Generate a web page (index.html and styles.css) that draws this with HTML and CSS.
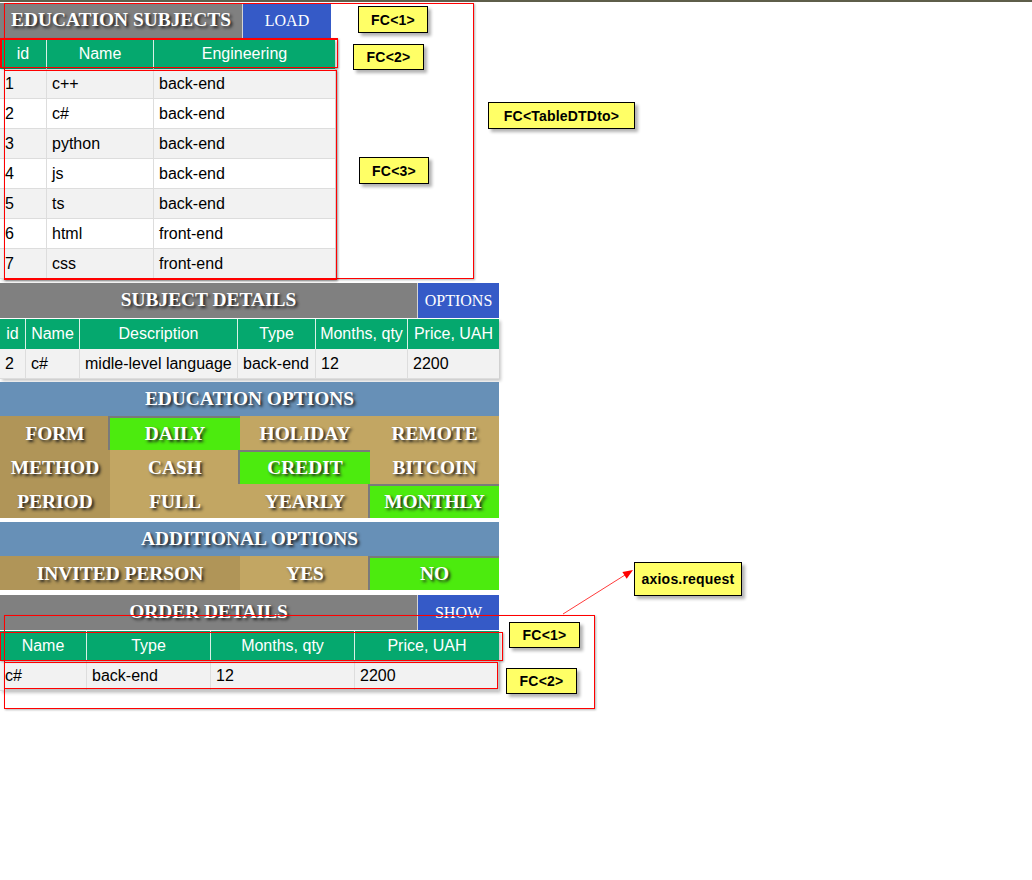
FILE: index.html
```html
<!DOCTYPE html>
<html lang="en">
<head>
<meta charset="utf-8">
<title>Education subjects</title>
<link rel="stylesheet" href="styles.css">
</head>
<body>
<div class="canvas">
  <div class="topline"></div>
  <main class="page">
    <section class="subjects">
      <div class="panel-head">
        <h2 class="panel-title t-subj">EDUCATION SUBJECTS</h2>
        <button class="btn b-subj">LOAD</button>
      </div>
      <table class="tbl">
        <thead>
          <tr><th class="c-s1">id</th><th class="c-s2">Name</th><th class="c-s3">Engineering</th></tr>
        </thead>
        <tbody>
          <tr><td>1</td><td>c++</td><td>back-end</td></tr>
          <tr><td>2</td><td>c#</td><td>back-end</td></tr>
          <tr><td>3</td><td>python</td><td>back-end</td></tr>
          <tr><td>4</td><td>js</td><td>back-end</td></tr>
          <tr><td>5</td><td>ts</td><td>back-end</td></tr>
          <tr><td>6</td><td>html</td><td>front-end</td></tr>
          <tr><td>7</td><td>css</td><td>front-end</td></tr>
        </tbody>
      </table>
    </section>

    <section class="details">
      <div class="panel-head">
        <h2 class="panel-title t-wide">SUBJECT DETAILS</h2>
        <button class="btn b-wide">OPTIONS</button>
      </div>
      <table class="tbl">
        <thead>
          <tr><th class="c-d1">id</th><th class="c-d2">Name</th><th class="c-d3">Description</th><th class="c-d4">Type</th><th class="c-d5">Months, qty</th><th class="c-d6">Price, UAH</th></tr>
        </thead>
        <tbody>
          <tr><td>2</td><td>c#</td><td>midle-level language</td><td>back-end</td><td>12</td><td>2200</td></tr>
        </tbody>
      </table>
    </section>

    <section class="options">
      <h2 class="bar">EDUCATION OPTIONS</h2>
      <div class="opt-grid">
        <div class="cell label">FORM</div>
        <div class="cell on">DAILY</div>
        <div class="cell">HOLIDAY</div>
        <div class="cell">REMOTE</div>
        <div class="cell label">METHOD</div>
        <div class="cell">CASH</div>
        <div class="cell on">CREDIT</div>
        <div class="cell">BITCOIN</div>
        <div class="cell label">PERIOD</div>
        <div class="cell">FULL</div>
        <div class="cell">YEARLY</div>
        <div class="cell on">MONTHLY</div>
      </div>
    </section>

    <section class="additional">
      <h2 class="bar">ADDITIONAL OPTIONS</h2>
      <div class="add-row">
        <div class="cell label">INVITED PERSON</div>
        <div class="cell">YES</div>
        <div class="cell on">NO</div>
      </div>
    </section>

    <section class="order">
      <div class="panel-head">
        <h2 class="panel-title t-wide">ORDER DETAILS</h2>
        <button class="btn b-wide">SHOW</button>
      </div>
      <table class="tbl">
        <thead>
          <tr><th class="c-o1">Name</th><th class="c-o2">Type</th><th class="c-o3">Months, qty</th><th class="c-o4">Price, UAH</th></tr>
        </thead>
        <tbody>
          <tr><td>c#</td><td>back-end</td><td>12</td><td>2200</td></tr>
        </tbody>
      </table>
    </section>
  </main>

  <div class="frame r-subj-outer"></div>
  <div class="frame r-subj-head"></div>
  <div class="frame r-subj-rows"></div>
  <div class="frame r-order-outer"></div>
  <div class="frame r-order-head"></div>
  <div class="frame r-order-rows"></div>

  <div class="note n-s1">FC&lt;1&gt;</div>
  <div class="note n-s2">FC&lt;2&gt;</div>
  <div class="note n-s3">FC&lt;3&gt;</div>
  <div class="note n-dto">FC&lt;TableDTDto&gt;</div>
  <div class="note n-axios">axios.request</div>
  <div class="note n-o1">FC&lt;1&gt;</div>
  <div class="note n-o2">FC&lt;2&gt;</div>

  <svg class="arrow" width="85" height="55" viewBox="0 0 85 55">
    <line x1="8" y1="49" x2="70" y2="10" stroke="#ff3b3b" stroke-width="1"/>
    <polygon points="78,5 71.7,13.7 67.4,6.9" fill="#ff0000"/>
  </svg>
</div>
</body>
</html>
```

FILE: styles.css
```css
* { box-sizing: border-box; }

body {
  margin: 0;
  background: #ffffff;
  font-family: "Liberation Sans", Arial, sans-serif;
}

.canvas {
  position: relative;
  width: 1032px;
  height: 880px;
}

.topline {
  height: 2px;
  background: #5e5e4a;
  margin-bottom: 1px;
}

.page {
  width: 499px;
  display: flex;
  flex-direction: column;
}

/* ---------- panel headers ---------- */
.panel-head {
  display: flex;
  height: 35px;
  margin-bottom: 1px;
}

.panel-title {
  margin: 0;
  flex: none;
  background: #808080;
  border-right: 1px solid #d4d4d4;
  color: #ffffff;
  font: bold 19.4px "Liberation Serif", "Times New Roman", serif;
  text-shadow: 2px 2px 3px #1e1e1e;
  display: flex;
  align-items: center;
  justify-content: center;
  padding-bottom: 1px;
}

.t-subj { width: 243px; }
.t-wide { width: 418px; }

.btn {
  flex: none;
  border: 0;
  padding: 0;
  margin: 0;
  background: #355ac7;
  color: #ffffff;
  font: 16px "Liberation Serif", "Times New Roman", serif;
  display: flex;
  align-items: center;
  justify-content: center;
}

.b-subj { width: 88px; }
.b-wide { width: 81px; }

/* ---------- tables ---------- */
.subjects { width: 335px; }

.tbl {
  border-collapse: separate;
  border-spacing: 0;
  table-layout: fixed;
  font-size: 16px;
  box-shadow: 2px 2px 3px rgba(0, 0, 0, 0.22);
}

.subjects .tbl { width: 335px; }
.details .tbl, .order .tbl { width: 499px; }

.tbl th {
  background: #05a86e;
  color: #ffffff;
  font-weight: normal;
  line-height: 30px;
  padding: 0 2px;
  text-align: center;
  border-right: 1px solid #d9f0e6;
  white-space: nowrap;
}

.tbl th:last-child { border-right: 0; }

.tbl td {
  line-height: 29px;
  padding: 0 5px;
  color: #000000;
  background: #f2f2f2;
  border-right: 1px solid #dddddd;
  border-bottom: 1px solid #dddddd;
  white-space: nowrap;
}

.tbl td:last-child { border-right: 0; }

.tbl tbody tr:nth-child(even) td { background: #ffffff; }

.c-s1 { width: 47px; }
.c-s2 { width: 107px; }
.c-s3 { width: 181px; }

.c-d1 { width: 26px; }
.c-d2 { width: 54px; }
.c-d3 { width: 158px; }
.c-d4 { width: 78px; }
.c-d5 { width: 92px; }
.c-d6 { width: 91px; }

.c-o1 { width: 87px; }
.c-o2 { width: 124px; }
.c-o3 { width: 144px; }
.c-o4 { width: 144px; }

.details { margin-top: 4px; }

/* ---------- option blocks ---------- */
.options { margin-top: 3px; }
.additional { margin-top: 4px; }
.order { margin-top: 5px; }

.bar {
  margin: 0;
  height: 34px;
  background: #6790b7;
  color: #ffffff;
  font: bold 19.4px "Liberation Serif", "Times New Roman", serif;
  text-shadow: 2px 2px 3px #1e1e1e;
  display: flex;
  align-items: center;
  justify-content: center;
}

.opt-grid {
  display: grid;
  grid-template-columns: 110px 130px 130px 129px;
  grid-auto-rows: 34px;
}

.add-row {
  display: grid;
  grid-template-columns: 240px 130px 129px;
  grid-auto-rows: 34px;
}

.cell {
  background: #c2a663;
  color: #ffffff;
  font: bold 19.4px "Liberation Serif", "Times New Roman", serif;
  text-shadow: 2px 2px 3px #1e1e1e;
  display: flex;
  align-items: center;
  justify-content: center;
  white-space: nowrap;
  padding-top: 2px;
}

.cell.label { background: #b09558; }

.cell.on {
  background: #4ceb0e;
  border-top: 2px solid #7a7a7a;
  box-shadow: -2px 0 0 #7a7a7a;
  padding-top: 0;
}

/* ---------- overlay frames ---------- */
.frame {
  position: absolute;
  border: 1px solid #ff0000;
  box-shadow: 1px 1px 2px rgba(0, 0, 0, 0.3);
  pointer-events: none;
}

.r-subj-outer { left: 4px; top: 3px; width: 470px; height: 276px; }
.r-subj-head { left: 0; top: 38px; width: 338px; height: 30px; border-width: 2px 1px 1px 2px; }
.r-subj-rows { left: 4px; top: 70px; width: 333px; height: 210px; }
.r-order-outer { left: 4px; top: 615px; width: 591px; height: 94px; }
.r-order-head { left: 0; top: 632px; width: 503px; height: 29px; }
.r-order-rows { left: 4px; top: 662px; width: 494px; height: 27px; }

/* ---------- notes ---------- */
.note {
  position: absolute;
  background: #ffff66;
  border: 1px solid #000000;
  box-shadow: 3px 3px 3px rgba(0, 0, 0, 0.3);
  color: #000000;
  font: bold 14px "Liberation Sans", Arial, sans-serif;
  letter-spacing: 0.2px;
  display: flex;
  align-items: center;
  justify-content: center;
  white-space: nowrap;
}

.n-s1 { left: 358px; top: 6px; width: 70px; height: 27px; }
.n-s2 { left: 353px; top: 44px; width: 71px; height: 26px; }
.n-s3 { left: 359px; top: 157px; width: 70px; height: 27px; }
.n-dto { left: 488px; top: 102px; width: 147px; height: 27px; }
.n-axios { left: 634px; top: 562px; width: 108px; height: 34px; }
.n-o1 { left: 509px; top: 622px; width: 71px; height: 26px; }
.n-o2 { left: 506px; top: 668px; width: 71px; height: 26px; }

.arrow {
  position: absolute;
  left: 555px;
  top: 565px;
}
```
